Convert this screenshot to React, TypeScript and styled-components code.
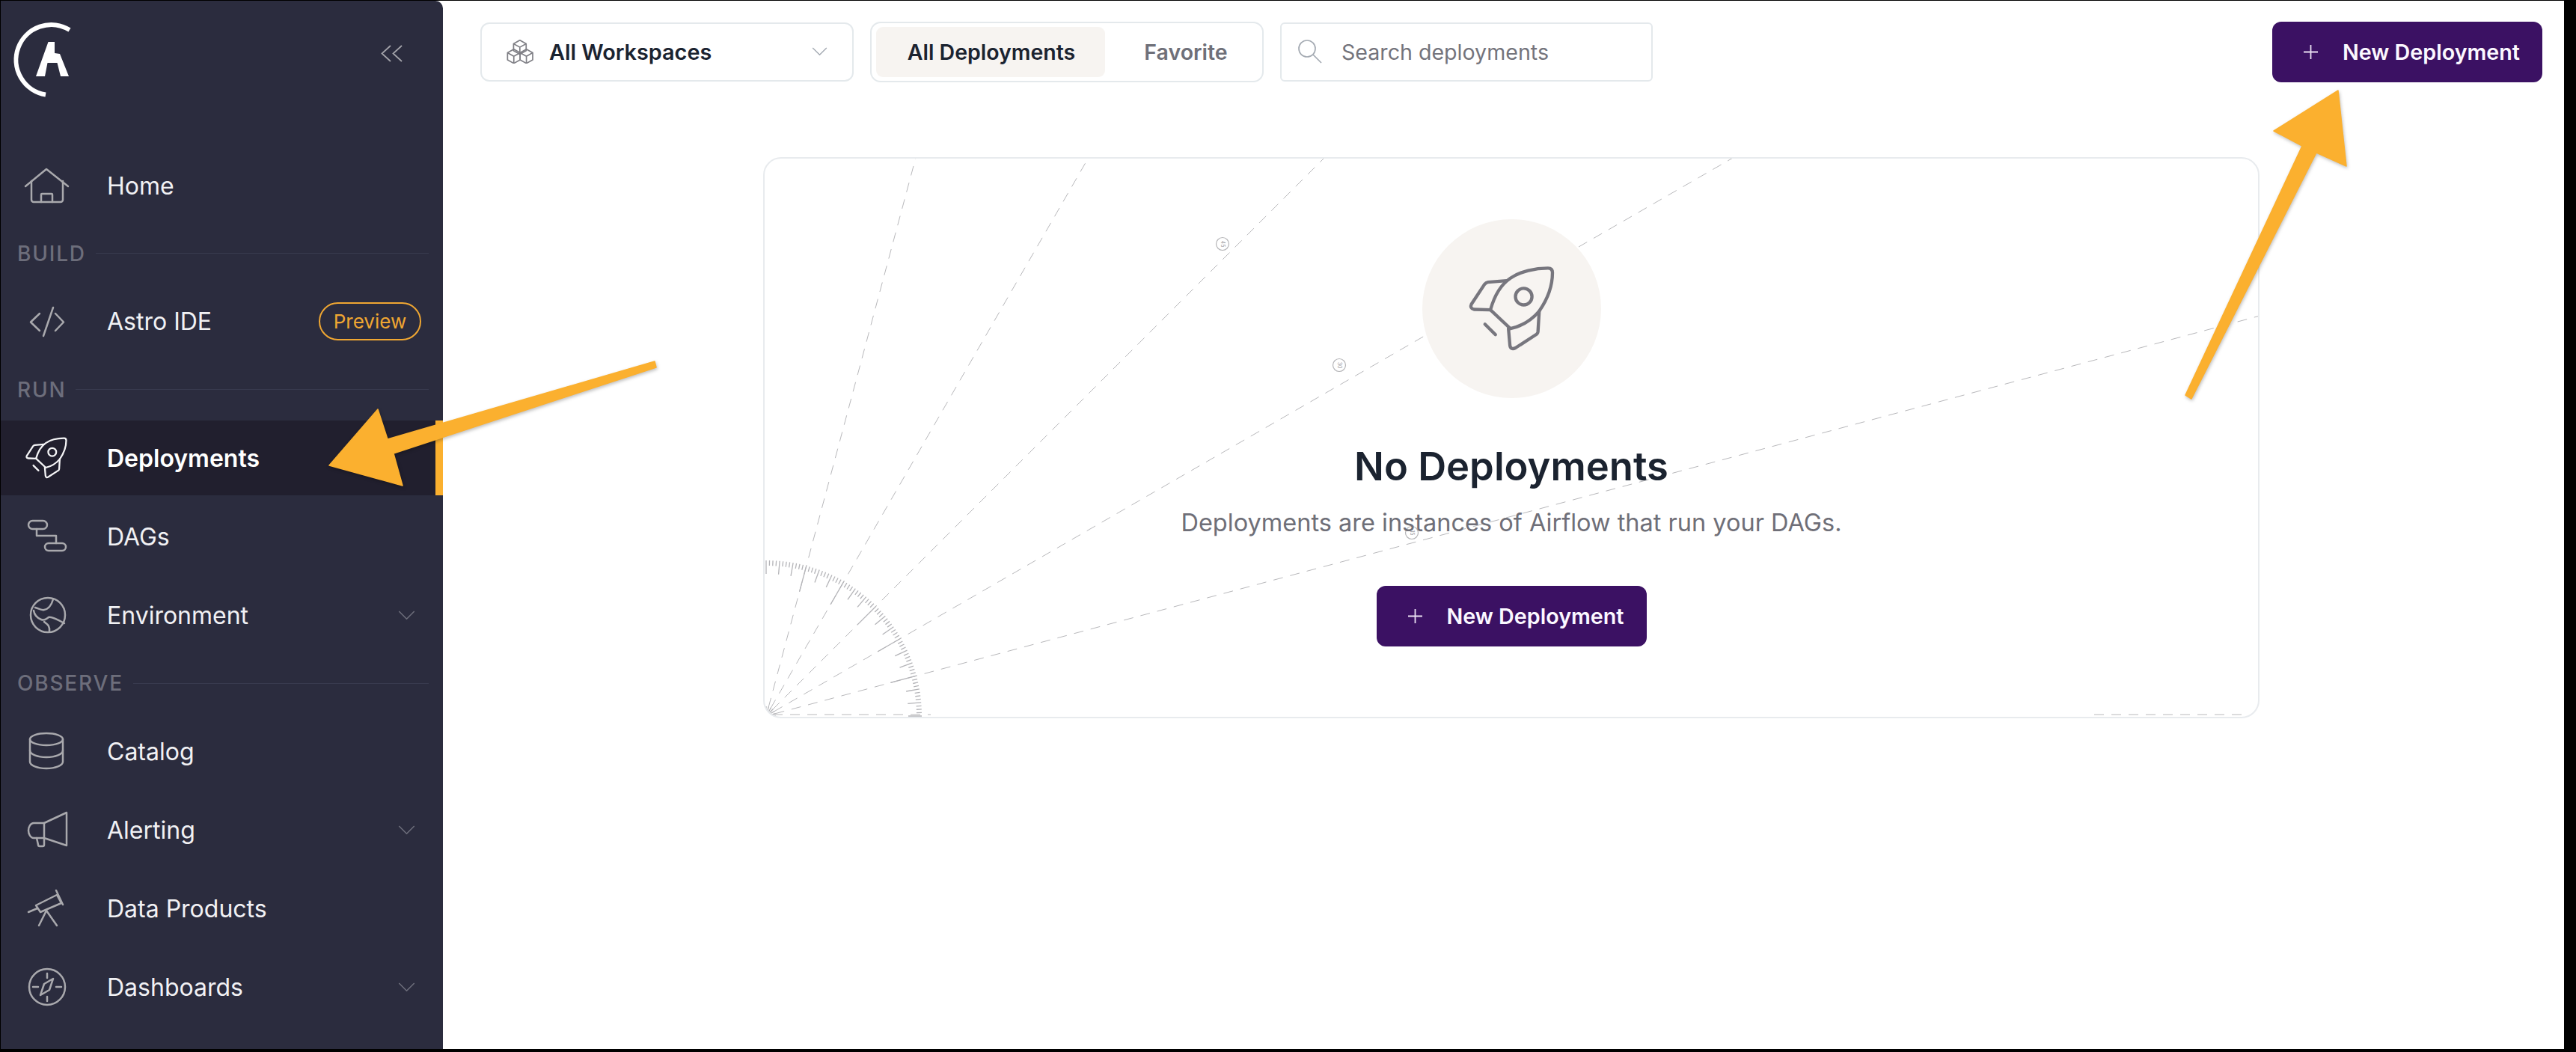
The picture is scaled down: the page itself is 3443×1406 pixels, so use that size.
import React from 'react'
import styled, { createGlobalStyle } from 'styled-components'

const GlobalStyle = createGlobalStyle`
  html, body {
    margin: 0;
    padding: 0;
    background: #000;
  }
  * {
    box-sizing: border-box;
  }
`

const Frame = styled.div`
  width: 3443px;
  height: 1406px;
  position: relative;
  overflow: hidden;
  background: #000;
  padding: 1px 16px 4px 1px;
  font-family: Inter, 'Liberation Sans', sans-serif;
`

const Window = styled.div`
  display: flex;
  height: 100%;
  background: #fff;
`

const Sidebar = styled.aside`
  width: 591px;
  flex: none;
  background: #2b2c3e;
  border-top-right-radius: 10px;
  display: flex;
  flex-direction: column;
`

const LogoBar = styled.div`
  height: 197px;
  flex: none;
  position: relative;
  display: flex;
  justify-content: space-between;
  align-items: flex-start;
  padding: 26px 53px 0 16px;
`

const CollapseButton = styled.svg`
  margin-top: 33px;
`

const NavRow = styled.div<{ $active?: boolean; $gapAfter?: boolean }>`
  height: 100px;
  flex: none;
  display: flex;
  align-items: center;
  padding: 0 37px 0 28px;
  margin-bottom: ${({ $gapAfter }) => ($gapAfter ? '5px' : '0')};
  background: ${({ $active }) => ($active ? '#211f2e' : 'transparent')};
  border-right: ${({ $active }) => ($active ? '10px solid #fbb02f' : '0 solid transparent')};
  color: ${({ $active }) => ($active ? '#fff' : '#f1f1f4')};
  font-size: 32px;
  font-weight: ${({ $active }) => ($active ? 600 : 400)};
`

const NavLabel = styled.span`
  margin-left: 48px;
  flex: 1;
`

const NavIconSvg = styled.svg<{ $bright?: boolean }>`
  flex: none;
  fill: none;
  stroke: ${({ $bright }) => ($bright ? '#f4f4f6' : '#a9a9ad')};
  stroke-width: 2.5;
  stroke-linecap: round;
  stroke-linejoin: round;
`

const PreviewBadge = styled.span`
  width: 137px;
  height: 51px;
  margin-right: -8px;
  border: 2px solid #f0a732;
  border-radius: 26px;
  color: #f0a732;
  font-size: 26px;
  display: flex;
  align-items: center;
  justify-content: center;
`

const SectionHead = styled.div<{ $h: number }>`
  height: ${({ $h }) => $h}px;
  flex: none;
  display: flex;
  align-items: center;
  gap: 13px;
  padding: 0 19px 0 22px;
  color: #6d6e7b;
  font-size: 28px;
  font-weight: 500;
  letter-spacing: 1.8px;
  &::after {
    content: '';
    flex: 1;
    height: 1px;
    background: #383a4e;
  }
`

const Main = styled.main`
  flex: 1;
  min-width: 0;
  display: flex;
  flex-direction: column;
`

const Toolbar = styled.div`
  height: 108px;
  flex: none;
  display: flex;
  align-items: center;
  padding: 28px 29px 0 50px;
  gap: 22px;
`

const SelectBox = styled.div`
  width: 499px;
  height: 79px;
  flex: none;
  border: 2px solid #e4e9ec;
  border-radius: 12px;
  display: flex;
  align-items: center;
  padding: 0 33px;
  gap: 20px;
  color: #1b2330;
  font-size: 28.8px;
  font-weight: 600;
  svg:last-child {
    margin-left: auto;
  }
`

const TabGroup = styled.div`
  width: 526px;
  height: 81px;
  flex: none;
  border: 2px solid #e4e9ec;
  border-radius: 14px;
  display: flex;
  align-items: center;
  padding: 0 6px;
`

const Tab = styled.div<{ $active?: boolean }>`
  height: 67px;
  width: ${({ $active }) => ($active ? '306px' : '204px')};
  padding-left: ${({ $active }) => ($active ? '2px' : '12px')};
  border-radius: 9px;
  background: ${({ $active }) => ($active ? '#f7f4f1' : 'transparent')};
  color: ${({ $active }) => ($active ? '#1b2330' : '#6f7079')};
  font-size: 28.5px;
  font-weight: 600;
  display: flex;
  align-items: center;
  justify-content: center;
`

const SearchBox = styled.div`
  width: 498px;
  height: 79px;
  flex: none;
  border: 2px solid #e4e9ec;
  border-radius: 6px;
  display: flex;
  align-items: center;
  padding: 0 21px;
  gap: 25px;
  color: #74747c;
  font-size: 28.6px;
`

const PrimaryButton = styled.button<{ $push?: boolean }>`
  width: 361px;
  height: 81px;
  flex: none;
  margin-left: ${({ $push }) => ($push ? 'auto' : '0')};
  border: 0;
  border-radius: 12px;
  background: #3b1163;
  color: #fbf8ff;
  font-family: inherit;
  font-size: 28.7px;
  font-weight: 600;
  display: flex;
  align-items: center;
  padding: 0 0 0 42px;
  gap: 33px;
`

const EmptyCard = styled.section`
  height: 750px;
  flex: none;
  margin: 101px 407px 0 428px;
  position: relative;
  border: 2px solid #e8ebee;
  border-radius: 24px;
  overflow: hidden;
  display: flex;
  flex-direction: column;
  align-items: center;
  padding-top: 81px;
`

const Protractor = styled.svg`
  position: absolute;
  inset: 0;
  width: 100%;
  height: 100%;
`

const IconCircle = styled.div`
  width: 239px;
  height: 239px;
  flex: none;
  position: relative;
  border-radius: 50%;
  background: #f7f4f1;
  display: flex;
  align-items: center;
  justify-content: center;
`

const EmptyTitle = styled.h2`
  position: relative;
  margin: 59px 0 0;
  color: #1b2330;
  font-size: 52.5px;
  line-height: 64px;
  font-weight: 600;
`

const EmptyText = styled.p`
  position: relative;
  margin: 19px 0 0;
  color: #6f6f78;
  font-size: 32.5px;
  line-height: 50px;
`

const EmptyAction = styled.div`
  position: relative;
  margin-top: 59px;
`

const Annotations = styled.svg`
  position: absolute;
  top: 0;
  left: 0;
  pointer-events: none;
  filter: drop-shadow(1px 2px 2px rgba(0, 0, 0, 0.25));
`

const RocketPaths = () => (
  <>
    <path d="M330 395 C345 340 370 295 410 268 C450 240 510 228 560 228 Q578 228 578 246 C578 300 560 350 525 400 C495 435 455 460 410 470 Z" />
    <path d="M395 278 L320 284 Q312 285 306 293 L254 372 Q246 388 264 393 L330 395" />
    <path d="M525 400 L520 482 Q519 490 512 494 L430 547 Q412 556 408 538 L402 470" />
    <circle cx="463" cy="342" r="33" />
    <path d="M308 452 L350 494" />
  </>
)

const navIcons: Record<string, React.ReactNode> = {
  home: (
    <>
      <path d="M5 34 L33 11 L62 34" />
      <path d="M13 27 V52 a3 3 0 0 0 3 3 H52 a3 3 0 0 0 3 -3 V27" />
      <path d="M26 55 V45 a1 1 0 0 1 1 -1 H40 a1 1 0 0 1 1 1 V55" />
    </>
  ),
  code: (
    <>
      <path d="M24 23 L12 34.5 L24 46" />
      <path d="M42 15 L29 53" />
      <path d="M45 23 L56 34.5 L45 46" />
    </>
  ),
  dags: (
    <>
      <rect x="9" y="12" width="25" height="11" rx="5.5" />
      <rect x="31" y="42" width="28" height="10" rx="5" />
      <path d="M20 23 V32 H46 V42" />
    </>
  ),
  globe: (
    <>
      <circle cx="35" cy="33" r="23" />
      <path d="M42 12 C40 19 36 25 30 26 C26 27 22 24 18 23" />
      <path d="M16 27 C17 33 21 37 26 39 C31 41 33 38 36 36 C39 35 46 38 57 44" />
      <path d="M30 42 C33 45 38 46 37 55" />
    </>
  ),
  database: (
    <>
      <ellipse cx="33" cy="17" rx="22" ry="8" />
      <path d="M11 17 V47 C11 52 21 56 33 56 C45 56 55 52 55 47 V17" />
      <path d="M11 32 C11 37 21 41 33 41 C45 41 55 37 55 32" />
    </>
  ),
  megaphone: (
    <>
      <path d="M60 10 V54 L30 44 V24 Z" />
      <path d="M30 24 H16 C12 24 9 29 9 34 C9 39 12 44 16 44 H30" />
      <path d="M20 44 L22 53 a2 2 0 0 0 2 2 h4 a2 2 0 0 0 2 -2 V44" />
    </>
  ),
  telescope: (
    <>
      <path d="M19 29 L47 15 L53 26 L25 38 Z" />
      <path d="M9 38 L21 33" />
      <path d="M46 9 L55 28" />
      <path d="M33 36 L23 56" />
      <path d="M33 36 L47 56" />
    </>
  ),
  compass: (
    <>
      <circle cx="34" cy="33" r="24" />
      <path d="M34 15 V21 M34 46 V52 M15 33 H22 M46 33 H53" />
      <path d="M42 22 L37 37 L25 44 L30 29 Z" />
    </>
  ),
}

const NavIcon = ({ name }: { name: string }) => (
  <NavIconSvg width="66" height="66" viewBox="0 0 66 66">
    {navIcons[name]}
  </NavIconSvg>
)

const Chevron = ({ color = '#6d6e7b', width = 23 }: { color?: string; width?: number }) => (
  <svg width={width} height={width * 0.55} viewBox="0 0 23 13" fill="none" stroke={color} strokeWidth="1.6">
    <path d="M1 1 L11.5 11.5 L22 1" />
  </svg>
)

type NavItemProps = {
  icon: string
  label: string
  expandable?: boolean
  gapAfter?: boolean
  children?: React.ReactNode
}

const NavItem = ({ icon, label, expandable, gapAfter, children }: NavItemProps) => (
  <NavRow $gapAfter={gapAfter}>
    <NavIcon name={icon} />
    <NavLabel>{label}</NavLabel>
    {children}
    {expandable && <Chevron />}
  </NavRow>
)

const Logo = () => (
  <svg width="90" height="110" viewBox="16 24 90 110">
    <path d="M92 37 A47 47 0 1 0 60 123.5" fill="none" stroke="#fff" strokeWidth="6" />
    <path d="M63.5 53 H72 V68 L79 69 L91 99 H80 L75.5 81 H62.5 L59 99 H47 Z" fill="#fff" />
  </svg>
)

const Cube = ({ x, y }: { x: number; y: number }) => (
  <g transform={`translate(${x} ${y})`}>
    <path d="M0 -28 L25 -14 V14 L0 28 L-25 14 V-14 Z" />
    <path d="M-25 -14 L0 0 L25 -14 M0 0 V28" />
  </g>
)

const WorkspacesIcon = () => (
  <svg width="37" height="32" viewBox="80 38 110 95" fill="none" stroke="#7f7f85" strokeWidth="5" strokeLinejoin="round">
    <Cube x={133} y={68} />
    <Cube x={109} y={104} />
    <Cube x={159} y={104} />
  </svg>
)

const SearchIcon = () => (
  <svg width="34" height="34" viewBox="0 0 34 34" fill="none" stroke="#a5abb3" strokeWidth="1.7">
    <circle cx="13" cy="13" r="11" />
    <path d="M21 21 L32 32" />
  </svg>
)

const PlusIcon = () => (
  <svg width="19" height="19" viewBox="0 0 19 19" stroke="#e9dff2" strokeWidth="1.8">
    <path d="M9.5 0 V19 M0 9.5 H19" />
  </svg>
)

const NewDeploymentButton = ({ push }: { push?: boolean }) => (
  <PrimaryButton $push={push}>
    <PlusIcon />
    New Deployment
  </PrimaryButton>
)

const ORIGIN_X = 1025
const ORIGIN_Y = 957
const rad = (deg: number) => (deg * Math.PI) / 180
const polar = (r: number, deg: number) => ({
  x: ORIGIN_X + r * Math.cos(rad(deg)),
  y: ORIGIN_Y - r * Math.sin(rad(deg)),
})

const ticks = Array.from({ length: 73 }, (_, i) => i * 1.25)

const tickInner = (deg: number) => {
  if (deg % 15 === 0 && deg % 90 !== 0) return 172
  if (deg % 5 === 0) return 190
  return 201
}

const ProtractorDrawing = () => (
  <Protractor viewBox="1023 212 1996 746" preserveAspectRatio="none" fill="none">
    <g stroke="#b8b8bb" strokeWidth="1" strokeDasharray="13 10">
      {[15, 30, 45, 60, 75].map((deg) => {
        const start = polar(12, deg)
        const end = polar(2300, deg)
        return <line key={deg} x1={start.x} y1={start.y} x2={end.x} y2={end.y} />
      })}
      <line x1="1034" y1="955" x2="1245" y2="955" />
      <line x1="2800" y1="955" x2="3000" y2="955" />
    </g>
    <g stroke="#b4b4b8" strokeWidth="1.3">
      {ticks.map((deg) => {
        const a = polar(tickInner(deg), deg)
        const b = polar(208, deg)
        return <line key={deg} x1={a.x} y1={a.y} x2={b.x} y2={b.y} />
      })}
      {[0, 15, 30, 45, 60, 75, 90].map((deg) => {
        const a = polar(4, deg)
        const b = polar(13, deg)
        return <line key={deg} x1={a.x} y1={a.y} x2={b.x} y2={b.y} />
      })}
    </g>
    {[
      { x: 1635, y: 326, label: '45' },
      { x: 1791, y: 488, label: '30' },
      { x: 1888, y: 712, label: '15' },
    ].map((mark) => (
      <g key={mark.label}>
        <circle cx={mark.x} cy={mark.y} r="8.5" stroke="#b4b4b7" strokeWidth="1.2" fill="#fff" />
        <text
          x={mark.x}
          y={mark.y + 2.5}
          fontSize="7"
          fill="#a0a0a4"
          stroke="none"
          textAnchor="middle"
          fontFamily="Inter, sans-serif"
          transform={`rotate(90 ${mark.x} ${mark.y})`}
        >
          {mark.label}
        </text>
      </g>
    ))}
  </Protractor>
)

const App = () => (
  <Frame>
    <GlobalStyle />
    <Window>
      <Sidebar>
        <LogoBar>
          <Logo />
          <CollapseButton width="30" height="23" viewBox="0 0 30 23" fill="none" stroke="#a2a2a9" strokeWidth="1.8">
            <path d="M13 1 L1.5 11.5 L13 22 M28 1 L16.5 11.5 L28 22" />
          </CollapseButton>
        </LogoBar>
        <NavItem icon="home" label="Home" />
        <SectionHead $h={81}>BUILD</SectionHead>
        <NavItem icon="code" label="Astro IDE">
          <PreviewBadge>Preview</PreviewBadge>
        </NavItem>
        <SectionHead $h={83}>RUN</SectionHead>
        <NavRow $active $gapAfter>
          <NavIconSvg $bright width="66" height="66" viewBox="212 187 406 406" style={{ strokeWidth: 14 }}>
            <RocketPaths />
          </NavIconSvg>
          <NavLabel>Deployments</NavLabel>
        </NavRow>
        <NavItem icon="dags" label="DAGs" gapAfter />
        <NavItem icon="globe" label="Environment" expandable />
        <SectionHead $h={82}>OBSERVE</SectionHead>
        <NavItem icon="database" label="Catalog" gapAfter />
        <NavItem icon="megaphone" label="Alerting" expandable gapAfter />
        <NavItem icon="telescope" label="Data Products" gapAfter />
        <NavItem icon="compass" label="Dashboards" expandable />
      </Sidebar>
      <Main>
        <Toolbar>
          <SelectBox>
            <WorkspacesIcon />
            All Workspaces
            <Chevron color="#a5abb3" width={21} />
          </SelectBox>
          <TabGroup>
            <Tab $active>All Deployments</Tab>
            <Tab>Favorite</Tab>
          </TabGroup>
          <SearchBox>
            <SearchIcon />
            Search deployments
          </SearchBox>
          <NewDeploymentButton push />
        </Toolbar>
        <EmptyCard>
          <ProtractorDrawing />
          <IconCircle>
            <svg
              width="117"
              height="117"
              viewBox="240 215 350 350"
              fill="none"
              stroke="#77767e"
              strokeWidth="13"
              strokeLinecap="round"
              strokeLinejoin="round"
            >
              <RocketPaths />
            </svg>
          </IconCircle>
          <EmptyTitle>No Deployments</EmptyTitle>
          <EmptyText>Deployments are instances of Airflow that run your DAGs.</EmptyText>
          <EmptyAction>
            <NewDeploymentButton />
          </EmptyAction>
        </EmptyCard>
      </Main>
    </Window>
    <Annotations width="3443" height="1406" viewBox="0 0 3443 1406" fill="#fbb02f" stroke="#fbb02f" strokeWidth="1.5" strokeLinejoin="round">
      <polygon points="440,622 505,547 518,587 875,483 877,491 526,606 538,649" />
      <polygon points="3125,121 3136,222 3096,204 2929,533 2921,528 3077,195 3039,175" />
    </Annotations>
  </Frame>
)

export default App
